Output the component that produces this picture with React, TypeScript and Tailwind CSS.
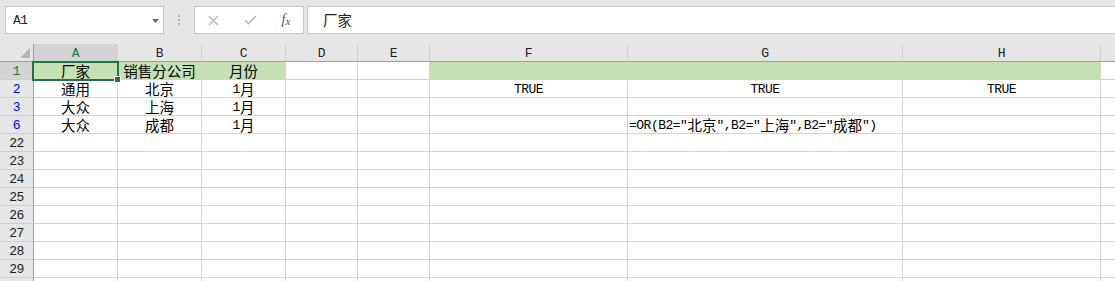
import React from "react";

const CJK = /[\u2e80-\u9fff\u3000-\u303f\uff00-\uffef]/;

// split a string into latin / cjk runs so each gets its own font
const Txt = ({ s }: { s: string }) => {
  const runs: { cjk: boolean; t: string }[] = [];
  for (const ch of s) {
    const c = CJK.test(ch);
    const last = runs[runs.length - 1];
    if (last && last.cjk === c) last.t += ch;
    else runs.push({ cjk: c, t: ch });
  }
  return (
    <>
      {runs.map((r, i) =>
        r.cjk ? (
          <span key={i} className="font-['Noto_Sans_CJK_SC',sans-serif] text-[14.5px]">
            {r.t}
          </span>
        ) : (
          <span key={i} className="font-['Liberation_Mono',monospace] text-[13px] tracking-[-0.5px]">
            {r.t}
          </span>
        )
      )}
    </>
  );
};

const letters = ["A", "B", "C", "D", "E", "F", "G", "H"];

type Row = {
  n: string;
  tone?: "sel" | "blue";
  fill?: string[];
  v: Record<string, string>;
  left?: Record<string, string>;
};

const rows: Row[] = [
  { n: "1", tone: "sel", fill: ["A", "B", "C", "F", "G", "H"], v: { A: "厂家", B: "销售分公司", C: "月份" } },
  { n: "2", tone: "blue", v: { A: "通用", B: "北京", C: "1月", F: "TRUE", G: "TRUE", H: "TRUE" } },
  { n: "3", tone: "blue", v: { A: "大众", B: "上海", C: "1月" } },
  { n: "6", tone: "blue", v: { A: "大众", B: "成都", C: "1月" }, left: { G: '=OR(B2="北京",B2="上海",B2="成都")' } },
  ...["22", "23", "24", "25", "26", "27", "28", "29", ""].map((n) => ({ n, v: {} })),
];

const Toolbar = () => (
  <div className="h-[44px] bg-[#e6e6e6] flex items-start pt-[6px] pl-[5px]">
    <div className="w-[159px] h-[28px] bg-white border border-[#c6c6c6] flex items-center justify-between pl-[7px] pr-[4px] pt-[1px] text-[#222]">
      <Txt s="A1" />
      <svg width="7" height="4" viewBox="0 0 7 4">
        <polygon points="0,0 7,0 3.5,4" fill="#6b6b6b" />
      </svg>
    </div>
    <div className="w-[30px] h-[28px] flex flex-col items-center justify-center gap-[2px]">
      <span className="w-[2px] h-[2px] bg-[#b3b3b3]" />
      <span className="w-[2px] h-[2px] bg-[#b3b3b3]" />
      <span className="w-[2px] h-[2px] bg-[#b3b3b3]" />
    </div>
    <div className="w-[110px] h-[28px] bg-white border border-[#c6c6c6] flex items-center">
      <div className="w-[36px] flex justify-center">
        <svg width="11" height="11" viewBox="0 0 11 11">
          <path d="M1 1L10 10M10 1L1 10" stroke="#b8b8b8" strokeWidth="1.3" />
        </svg>
      </div>
      <div className="w-[38px] flex justify-center">
        <svg width="13" height="10" viewBox="0 0 13 10">
          <path d="M1 5L4.5 8.5L12 1" stroke="#b8b8b8" strokeWidth="1.6" fill="none" />
        </svg>
      </div>
      <div className="w-[34px] flex justify-center items-end font-['Liberation_Serif',serif] italic text-[#555]">
        <span className="text-[14px] leading-none">f</span>
        <span className="text-[11px] leading-none">x</span>
      </div>
    </div>
    <div className="ml-[3px] flex-1 h-[28px] bg-white border border-r-0 border-[#c6c6c6] flex items-center pl-[15px] text-[#222]">
      <Txt s="厂家" />
    </div>
  </div>
);

const Header = () => (
  <>
    <div className="h-[18px] bg-[#e6e6e6] border-r border-b border-[#9e9e9e] flex items-end justify-end pr-[3px] pb-[3px]">
      <svg width="10" height="10" viewBox="0 0 10 10">
        <polygon points="10,0 10,10 0,10" fill="#b4b4b4" />
      </svg>
    </div>
    {letters.map((l) => (
      <div
        key={l}
        className={`h-[18px] border-r border-r-[#cfcfcf] border-b border-b-[#9e9e9e] flex items-center justify-center pt-[2px] leading-none ${
          l === "A" ? "bg-[#d3d3d3] text-[#217346]" : "bg-[#e6e6e6] text-[#222]"
        }`}
      >
        <Txt s={l} />
      </div>
    ))}
    <div className="h-[18px] bg-[#e6e6e6] border-b border-[#9e9e9e]" />
  </>
);

export default function App() {
  return (
    <div className="w-[1115px] h-[281px] overflow-hidden bg-white">
      <Toolbar />
      <div className="grid grid-cols-[34px_84px_84px_84px_72px_72px_198px_275px_198px_14px]">
        <Header />
        {rows.map((r, ri) => (
          <React.Fragment key={ri}>
            <div
              className={`h-[18px] border-r border-r-[#9e9e9e] border-b border-b-[#cfcfcf] flex items-center justify-center pt-[2px] leading-none ${
                r.tone === "sel"
                  ? "bg-[#d3d3d3] text-[#217346]"
                  : r.tone === "blue"
                  ? "bg-[#e6e6e6] text-[#0000ff]"
                  : "bg-[#e6e6e6] text-[#222]"
              }`}
            >
              {r.n && <Txt s={r.n} />}
            </div>
            {letters.map((l) => {
              const filled = r.fill?.includes(l);
              const sel = r.n === "1" && l === "A";
              const leftText = r.left?.[l];
              return (
                <div
                  key={l}
                  className={`relative h-[18px] border-r border-b flex items-center pt-[2px] leading-none text-black whitespace-nowrap ${
                    filled ? "bg-[#c6e0b4] border-[#c6e0b4]" : "bg-white border-[#d4d4d4]"
                  } ${leftText ? "justify-start pl-[1px]" : "justify-center"}`}
                >
                  {leftText ? <Txt s={leftText} /> : r.v[l] ? <Txt s={r.v[l]} /> : null}
                  {sel && (
                    <>
                      <div className="absolute z-10 left-[-2px] top-[-1px] w-[87px] h-[20px] border-2 border-[#217346]" />
                      <div className="absolute z-10 left-[80px] top-[14px] w-[7px] h-[7px] bg-[#217346] border border-white" />
                    </>
                  )}
                </div>
              );
            })}
            <div className="h-[18px] border-b border-[#d4d4d4] bg-white" />
          </React.Fragment>
        ))}
      </div>
    </div>
  );
}
